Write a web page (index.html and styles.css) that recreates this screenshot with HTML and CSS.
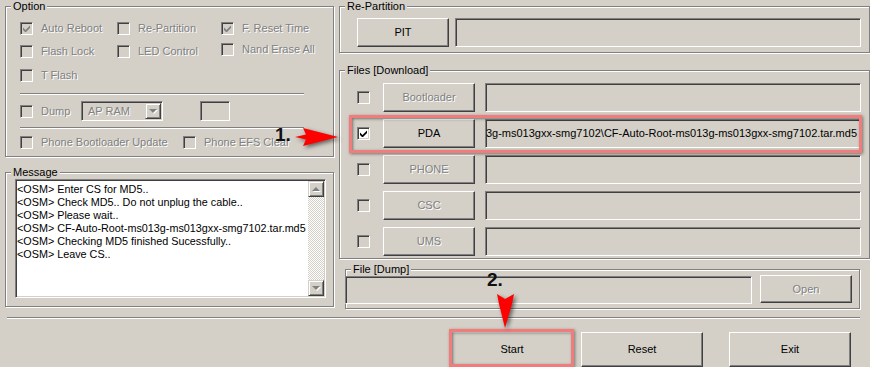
FILE: index.html
```html
<!doctype html>
<html>
<head>
<meta charset="utf-8">
<link rel="stylesheet" href="styles.css">
</head>
<body>
<div class="app">

<div class="top">
<div class="leftcol">
	<div class="group option">
		<span class="title">Option</span>
		<div class="opts">
			<div class="item"><span class="cb"><svg class="tick" viewBox="0 0 7 7"><polygon points="0,2.5 2.5,5 7,0.5 7,3 2.5,7.5 0,5"/></svg></span><span class="dis">Auto Reboot</span></div>
			<div class="item"><span class="cb"></span><span class="dis">Re-Partition</span></div>
			<div class="item"><span class="cb"><svg class="tick" viewBox="0 0 7 7"><polygon points="0,2.5 2.5,5 7,0.5 7,3 2.5,7.5 0,5"/></svg></span><span class="dis">F. Reset Time</span></div>
			<div class="item"><span class="cb"></span><span class="dis">Flash Lock</span></div>
			<div class="item"><span class="cb"></span><span class="dis">LED Control</span></div>
			<div class="item up"><span class="cb"></span><span class="dis">Nand Erase All</span></div>
			<div class="item"><span class="cb"></span><span class="dis">T Flash</span></div>
		</div>
		<div class="etch"></div>
		<div class="dumprow">
			<div class="item w61"><span class="cb"></span><span class="dis">Dump</span></div>
			<div class="combo"><span class="dis">AP RAM</span><span class="drop"><i class="tri down"></i></span></div>
			<div class="field small"></div>
		</div>
		<div class="etch"></div>
		<div class="phonerow">
			<div class="item w163"><span class="cb"></span><span class="dis">Phone Bootloader Update</span></div>
			<div class="item"><span class="cb"></span><span class="dis">Phone EFS Clear</span></div>
		</div>
	</div>

	<div class="group message">
		<span class="title">Message</span>
		<div class="msgbox">
			<div class="msglines">
				<div>&lt;OSM&gt; Enter CS for MD5..</div>
				<div>&lt;OSM&gt; Check MD5.. Do not unplug the cable..</div>
				<div>&lt;OSM&gt; Please wait..</div>
				<div>&lt;OSM&gt; CF-Auto-Root-ms013g-ms013gxx-smg7102.tar.md5</div>
				<div>&lt;OSM&gt; Checking MD5 finished Sucessfully..</div>
				<div>&lt;OSM&gt; Leave CS..</div>
			</div>
			<div class="vscroll">
				<span class="sbtn"><i class="tri up"></i></span>
				<span class="sbtn"><i class="tri down"></i></span>
			</div>
		</div>
	</div>
</div>

<div class="rightcol">
	<div class="group repart">
		<span class="title">Re-Partition</span>
		<div class="row">
			<span class="btn w92">PIT</span>
			<span class="field grow"></span>
		</div>
	</div>

	<div class="group files">
		<span class="title">Files [Download]</span>
		<div class="frow"><span class="cb"></span><span class="btn dis">Bootloader</span><span class="field"></span></div>
		<div class="frow"><span class="cb on"><svg class="tick" viewBox="0 0 7 7"><polygon points="0,2.5 2.5,5 7,0.5 7,3 2.5,7.5 0,5"/></svg></span><span class="btn">PDA</span><span class="field path"><span>3g-ms013gxx-smg7102\CF-Auto-Root-ms013g-ms013gxx-smg7102.tar.md5</span></span></div>
		<div class="frow"><span class="cb"></span><span class="btn dis">PHONE</span><span class="field"></span></div>
		<div class="frow"><span class="cb"></span><span class="btn dis">CSC</span><span class="field"></span></div>
		<div class="frow"><span class="cb"></span><span class="btn dis">UMS</span><span class="field"></span></div>
	</div>

	<div class="group dumpfile">
		<span class="title">File [Dump]</span>
		<span class="field grow"></span>
		<span class="btn dis w92 open">Open</span>
	</div>
</div>
</div>

<div class="sep"></div>

<div class="actions">
	<span class="btn big start">Start</span>
	<span class="btn big reset">Reset</span>
	<span class="btn big exit">Exit</span>
</div>

<!-- annotations drawn over the window -->
<div class="mark mark-pda"></div>
<div class="mark mark-start"></div>
<span class="num num1">1.</span>
<span class="num num2">2.</span>
<svg class="arrows" viewBox="0 0 870 367">
	<path d="M295 137 L306 134.5 L303 128 L338 137 L303 146 L306 139.5 Z"/>
	<path d="M497 294 L505 299 L514 294 L512 304 L505 328 L499 304 Z"/>
</svg>

</div>
</body>
</html>
```

FILE: styles.css
```css
body{
	margin:0;
	padding:0;
	background:#d4d0c8;
}
.app{
	position:relative;
	width:870px;
	height:367px;
	overflow:hidden;
	background:#d4d0c8;
	font-family:"Liberation Sans", Arial, sans-serif;
	font-size:11px;
	line-height:13px;
	color:#000;
}
.top{
	display:flex;
	height:317px;
}
.leftcol{
	width:329px;
	margin-left:5px;
	padding-top:6px;
}
.rightcol{
	width:531px;
	margin-left:5px;
	padding-top:6px;
}

/* etched group box */
.group{
	position:relative;
	border:1px solid #808080;
	box-shadow:1px 1px 0 #fff, inset 1px 1px 0 #fff;
}
.title{
	position:absolute;
	top:-7px;
	left:5px;
	padding:0 2px;
	background:#d4d0c8;
	white-space:nowrap;
}

/* controls */
.cb{
	flex:none;
	width:13px;
	height:13px;
	box-sizing:border-box;
	border:1px solid;
	border-color:#808080 #fff #fff #808080;
	box-shadow:inset 1px 1px 0 #404040, inset -1px -1px 0 #d4d0c8;
	background:#d4d0c8;
	display:flex;
	align-items:center;
	justify-content:center;
}
.cb.on{
	background:#fff;
}
.tick{
	width:7px;
	height:7px;
	fill:#808080;
}
.cb.on .tick{
	fill:#000;
}
.btn{
	flex:none;
	box-sizing:border-box;
	display:flex;
	align-items:center;
	justify-content:center;
	background:#d4d0c8;
	border:1px solid;
	border-color:#fff #404040 #404040 #fff;
	box-shadow:inset -1px -1px 0 #808080;
	white-space:nowrap;
}
.field{
	box-sizing:border-box;
	border:1px solid;
	border-color:#808080 #fff #fff #808080;
	box-shadow:inset 1px 1px 0 #404040, inset -1px -1px 0 #d4d0c8;
	background:#d4d0c8;
}
.dis{
	color:#808080;
	text-shadow:1px 1px 0 #fff;
}
.w92{
	width:92px;
}
.grow{
	flex:1;
}

/* option box */
.option{
	padding:11px 0 7px 14px;
}
.opts{
	display:grid;
	grid-template-columns:97px 104px auto;
	grid-template-rows:21px 24px 24px;
}
.item{
	display:flex;
	align-items:center;
	gap:8px;
	white-space:nowrap;
}
.item.up{
	margin-bottom:4px;
}
.w61{
	width:61px;
}
.w163{
	width:163px;
}
.etch{
	width:284px;
	border-top:1px solid #808080;
	border-bottom:1px solid #fff;
	margin-top:6px;
}
.dumprow{
	display:flex;
	align-items:center;
	height:20px;
	margin:6px 0 1px;
}
.combo{
	box-sizing:border-box;
	width:82px;
	height:20px;
	padding:1px;
	display:flex;
	align-items:center;
	border:1px solid;
	border-color:#808080 #fff #fff #808080;
	box-shadow:inset 1px 1px 0 #404040, inset -1px -1px 0 #d4d0c8;
}
.combo .dis{
	padding-left:5px;
}
.drop{
	margin-left:auto;
	width:16px;
	height:16px;
	box-sizing:border-box;
	display:flex;
	align-items:center;
	justify-content:center;
	border:1px solid;
	border-color:#d4d0c8 #404040 #404040 #d4d0c8;
	box-shadow:inset 1px 1px 0 #fff, inset -1px -1px 0 #808080;
}
.field.small{
	width:30px;
	height:20px;
	margin-left:37px;
}
.phonerow{
	display:flex;
	align-items:center;
	height:13px;
	margin-top:7px;
}

/* message box */
.message{
	margin-top:15px;
	padding:6px 7px 8px 9px;
}
.msgbox{
	display:flex;
	height:119px;
	box-sizing:border-box;
	padding:1px;
	border:1px solid;
	border-color:#808080 #fff #fff #808080;
	box-shadow:inset 1px 1px 0 #404040, inset -1px -1px 0 #d4d0c8;
	background:#fff;
}
.msglines{
	flex:1;
	padding-top:2px;
	overflow:hidden;
	white-space:nowrap;
	font-size:10.8px;
}
.vscroll{
	width:16px;
	display:flex;
	flex-direction:column;
	justify-content:space-between;
	background:repeating-conic-gradient(#d4d0c8 0 25%, #fff 0 50%) 0 0/2px 2px;
}
.sbtn{
	height:16px;
	box-sizing:border-box;
	display:flex;
	align-items:center;
	justify-content:center;
	background:#d4d0c8;
	border:1px solid;
	border-color:#d4d0c8 #404040 #404040 #d4d0c8;
	box-shadow:inset 1px 1px 0 #fff, inset -1px -1px 0 #808080;
}
.tri{
	width:0;
	height:0;
	border-left:4px solid transparent;
	border-right:4px solid transparent;
	filter:drop-shadow(1px 1px 0 #fff);
}
.tri.up{
	border-bottom:4px solid #808080;
}
.tri.down{
	border-top:4px solid #808080;
}

/* right side */
.repart{
	padding:11px 8px 5px 17px;
}
.row{
	display:flex;
	gap:6px;
}
.repart .btn,
.repart .field{
	height:29px;
}
.files{
	margin-top:17px;
	padding:12px 8px 2px 17px;
	display:flex;
	flex-direction:column;
	gap:7px;
}
.frow{
	display:flex;
	align-items:center;
	height:29px;
}
.frow .cb{
	margin-right:13px;
}
.frow .btn{
	width:92px;
	height:29px;
	margin-right:10px;
}
.frow .field{
	flex:1;
	height:29px;
}
.field.path{
	display:flex;
	align-items:center;
	justify-content:flex-end;
	padding:0 3px;
	overflow:hidden;
	white-space:nowrap;
}
.field.path span{
	flex:none;
}
.dumpfile{
	margin:10px 10px 0 6px;
	padding:6px 7px 4px 0;
	display:flex;
	gap:8px;
}
.dumpfile .field{
	height:28px;
	margin-left:-1px;
}
.dumpfile .open{
	height:28px;
	margin-top:-1px;
}

/* bottom bar */
.sep{
	margin:0 10px 0 7px;
	border-top:1px solid #808080;
	border-bottom:1px solid #fff;
}
.actions{
	display:flex;
	padding-top:13px;
}
.btn.big{
	width:122px;
	height:35px;
}
.start{
	margin-left:451px;
}
.reset{
	margin-left:8px;
}
.exit{
	margin-left:26px;
}

/* annotations */
.mark{
	position:absolute;
	border:3px solid #f07c7c;
	box-shadow:1px 1px 3px rgba(0,0,0,.45), inset 1px 1px 3px rgba(0,0,0,.45);
}
.mark-pda{
	left:349px;
	top:115px;
	width:507px;
	height:32px;
}
.mark-start{
	left:449px;
	top:329px;
	width:119px;
	height:32px;
}
.num{
	position:absolute;
	font:bold 19px/19px "Liberation Sans", Arial, sans-serif;
	color:#111;
}
.num1{
	left:275px;
	top:125px;
}
.num2{
	left:487px;
	top:270px;
}
.arrows{
	position:absolute;
	left:0;
	top:0;
	width:870px;
	height:367px;
	fill:#f00;
	pointer-events:none;
	filter:drop-shadow(2px 2px 2px rgba(0,0,0,.55));
}
```
